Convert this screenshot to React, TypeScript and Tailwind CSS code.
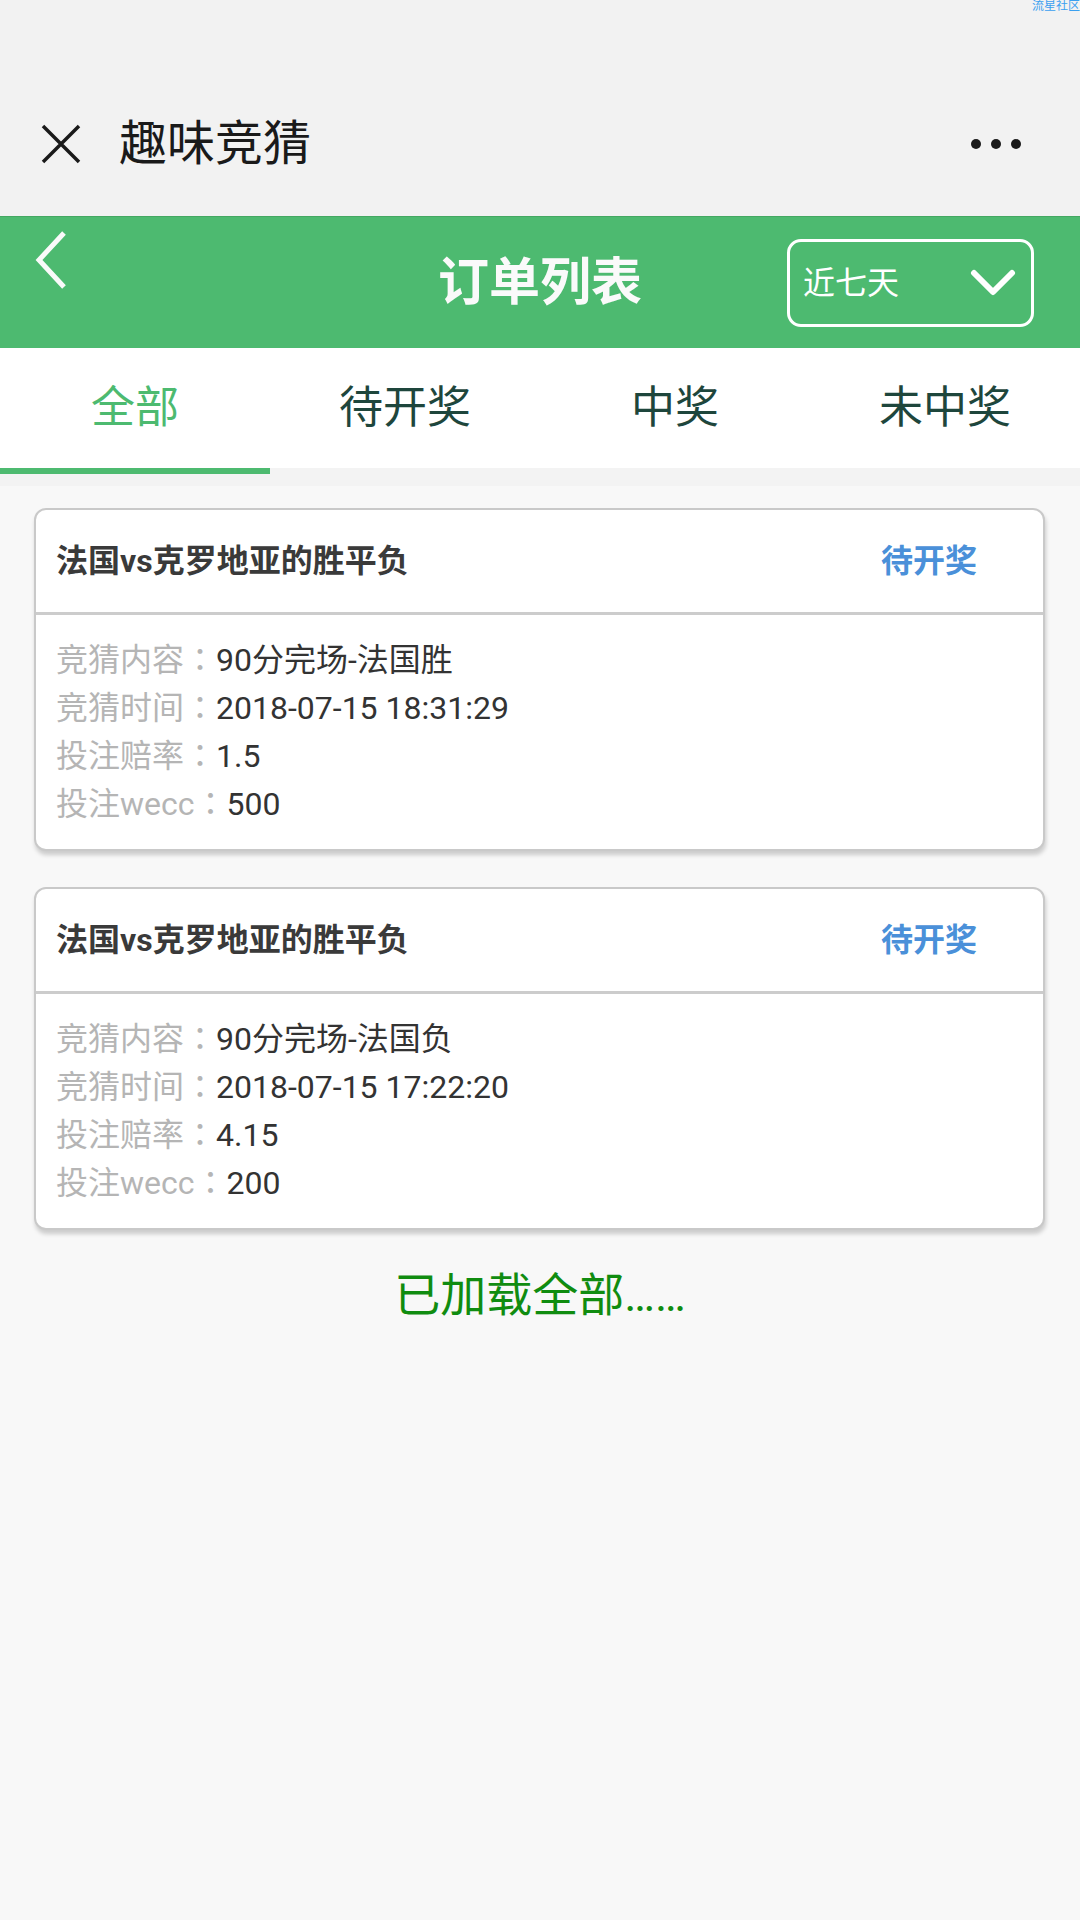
import React, { useState } from 'react';

const orders = [
  { id: 1, title: '法国vs克罗地亚的胜平负', status: '待开奖', content: '90分完场-法国胜', time: '2018-07-15 18:31:29', odds: '1.5', wecc: '500' },
  { id: 2, title: '法国vs克罗地亚的胜平负', status: '待开奖', content: '90分完场-法国负', time: '2018-07-15 17:22:20', odds: '4.15', wecc: '200' },
];

const tabs = ['全部', '待开奖', '中奖', '未中奖'];

const font = "font-['Roboto','Noto_Sans_CJK_SC',sans-serif]";

const Row = ({ label, value }: { label: string; value: string }) => (
  <p className="h-[48px] overflow-visible">
    <span className="text-[#b5b5b5]">
      {label}
      <span className="font-['Noto_Sans_CJK_TC',sans-serif] leading-none">：</span>
    </span>
    {value}
  </p>
);

export default function App() {
  const [active, setActive] = useState(0);

  return (
    <div className={`w-[1080px] min-h-[1920px] bg-[#f8f8f8] ${font}`}>
      {/* WeChat top bar */}
      <div className="relative h-[216px] bg-[#f2f2f2]">
        <span className="absolute top-[-2px] right-0 text-[12px] leading-[16px] text-[#3ba0f0]">流星社区</span>
        <div className="h-[72px]" />
        <div className="flex h-[144px] items-center pl-[40px] pr-[59px]">
          <svg width="42" height="42" viewBox="0 0 42 42" className="shrink-0">
            <path d="M3 3 L39 39 M39 3 L3 39" stroke="#1a1a1a" strokeWidth="3.5" strokeLinecap="butt" />
          </svg>
          <span className="ml-[37px] text-[48px] leading-none text-[#1a1a1a]">趣味竞猜</span>
          <div className="ml-auto flex items-center gap-[10px]">
            <span className="h-[10px] w-[10px] rounded-full bg-[#1a1a1a]" />
            <span className="h-[10px] w-[10px] rounded-full bg-[#1a1a1a]" />
            <span className="h-[10px] w-[10px] rounded-full bg-[#1a1a1a]" />
          </div>
        </div>
      </div>

      {/* Green header */}
      <div className="grid h-[132px] grid-cols-[1fr_auto_1fr] items-center border-t border-[#44a862] bg-[#4dba70]">
        <div className="self-start pl-[34px] pt-[13px]">
          <svg width="34" height="60" viewBox="0 0 34 60">
            <path d="M30 3 L5 30 L30 57" fill="none" stroke="#fafafa" strokeWidth="5" />
          </svg>
        </div>
        <h1 className="text-[51px] font-bold leading-none text-[#fafafa]">订单列表</h1>
        <div className="flex justify-end pr-[46px]">
          <button className="flex h-[88px] w-[247px] items-center justify-between rounded-[14px] border-[3px] border-white pl-[13px] pr-[15px]">
            <span className="text-[32px] leading-none text-white">近七天</span>
            <svg width="46" height="28" viewBox="0 0 46 28">
              <path d="M4 4 L23 23 L42 4" fill="none" stroke="white" strokeWidth="6" strokeLinecap="round" strokeLinejoin="round" />
            </svg>
          </button>
        </div>
      </div>

      {/* Tabs */}
      <div className="grid h-[120px] grid-cols-4 bg-white">
        {tabs.map((t, i) => (
          <button
            key={t}
            onClick={() => setActive(i)}
            className={`flex items-center justify-center text-[44px] leading-none ${i === active ? 'text-[#4dba70]' : 'text-[#1e463c]'}`}
          >
            {t}
          </button>
        ))}
      </div>
      <div className="h-[18px] bg-[#f3f3f3]">
        <div className="h-[6px] w-[270px] bg-[#4dba70]" style={{ marginLeft: active * 270 }} />
      </div>

      {/* Order list */}
      <div className="flex flex-col gap-[36px] pl-[34px] pr-[35px] pt-[22px]">
        {orders.map((o) => (
          <div key={o.id} className="rounded-[12px] border-2 border-[#c9c9c9] bg-white shadow-[1px_4px_4px_rgba(0,0,0,0.18)]">
            <div className="flex h-[105px] items-center justify-between border-b-[3px] border-[#cccccc] pl-[20px] pr-[66px]">
              <span className="text-[32px] font-bold leading-none text-[#3a3a3a]">{o.title}</span>
              <span className="text-[32px] font-semibold leading-none text-[#4a90d9]">{o.status}</span>
            </div>
            <div className="pb-[21px] pl-[20px] pt-[21px] text-[32px] leading-[48px] text-[#333333]">
              <Row label="竞猜内容" value={o.content} />
              <Row label="竞猜时间" value={o.time} />
              <Row label="投注赔率" value={o.odds} />
              <Row label="投注wecc" value={o.wecc} />
            </div>
          </div>
        ))}
      </div>

      <p className="mt-[33px] text-center text-[46px] leading-[64px] text-[#108c10]">已加载全部……</p>
    </div>
  );
}
